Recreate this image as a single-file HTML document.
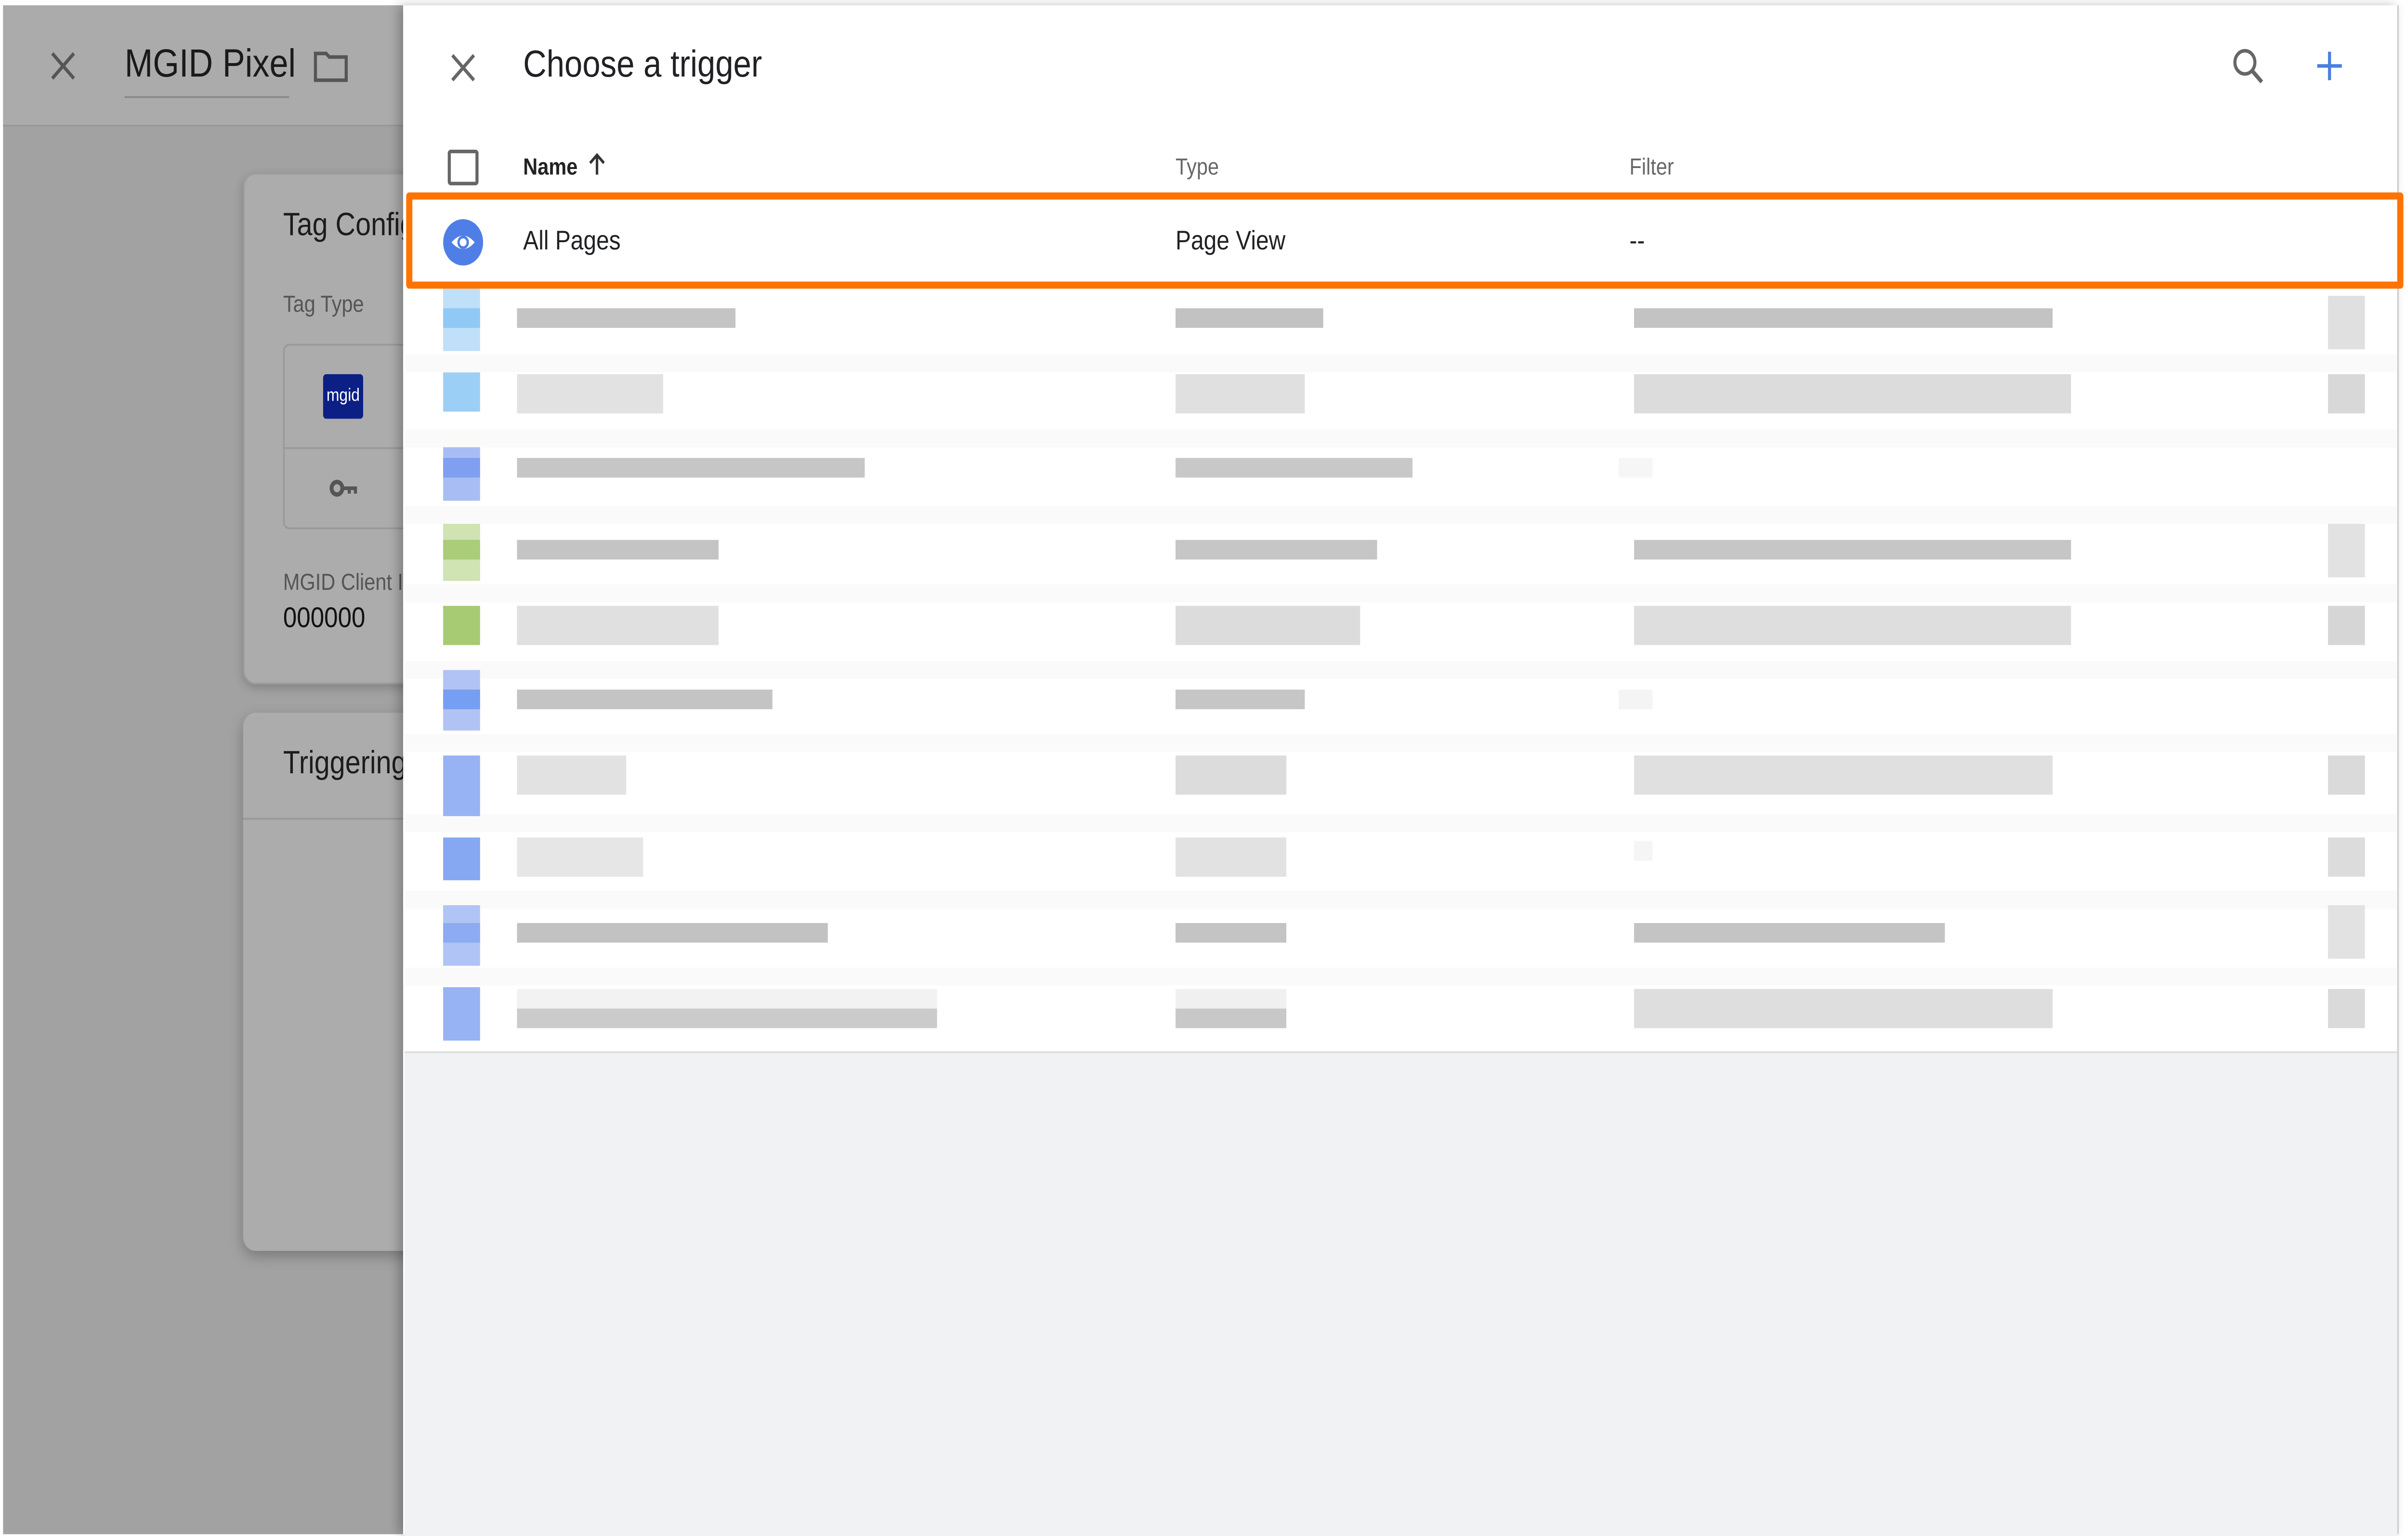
<!DOCTYPE html>
<html><head><meta charset="utf-8"><style>
html,body{margin:0;padding:0;width:100%;height:100%;overflow:hidden;background:#fff}
#root{position:fixed;left:0;top:0;width:100vw;height:100vh}
#s{position:relative;width:1565px;height:862px;overflow:hidden;font-family:"Liberation Sans",Arial,sans-serif}
.a{position:absolute}
.bar{position:absolute;height:11px}
</style></head><body>
<svg id="root" viewBox="0 0 1565 862" preserveAspectRatio="none" xmlns="http://www.w3.org/2000/svg"><foreignObject x="0" y="0" width="1565" height="862"><div xmlns="http://www.w3.org/1999/xhtml" id="s">
<div class="a" style="left:0;top:0;width:1565px;height:862px;background:#fff"></div>
<div class="a" style="left:2px;top:3px;width:262px;height:858px;background:#a1a2a1"></div>
<div class="a" style="left:2px;top:3px;width:262px;height:67px;background:#ababab;border-bottom:1px solid #999"></div>
<svg class="a" style="left:31px;top:27px" width="20" height="20" viewBox="0 0 20 20"><path d="M3 3L17 17M17 3L3 17" stroke="#555" stroke-width="2"/></svg>
<div class="a" style="left:81px;top:23px;font-size:22px;color:#1a1a1a">MGID Pixel</div>
<div class="a" style="left:81px;top:54px;width:107px;height:1px;background:#888"></div>
<svg class="a" style="left:203px;top:27px" width="24" height="20" viewBox="0 0 24 20"><path d="M2 3h7l2 2h11v13H2z" fill="none" stroke="#555" stroke-width="2"/></svg>
<div class="a" style="left:158px;top:97px;width:120px;height:285px;background:#acacac;border-radius:8px;border:1px solid #9d9d9d;box-shadow:0 2px 6px rgba(0,0,0,.2)"></div>
<div class="a" style="left:184px;top:116px;font-size:18px;color:#1c1c1c">Tag Config</div>
<div class="a" style="left:184px;top:163px;font-size:13px;color:#555">Tag Type</div>
<div class="a" style="left:184px;top:193px;width:90px;height:102px;border:1px solid #999;border-radius:4px"></div>
<div class="a" style="left:184px;top:251px;width:90px;height:1px;background:#999"></div>
<div class="a" style="left:210px;top:210px;width:26px;height:25px;background:#0b1f85;border-radius:2px;color:#fff;font-size:10px;line-height:25px;text-align:center">mgid</div>
<svg class="a" style="left:214px;top:268px" width="20" height="12" viewBox="0 0 20 12"><circle cx="5" cy="6" r="3.5" fill="none" stroke="#555" stroke-width="2.5"/><path d="M8 5h10v4h-2V7h-2v2h-2V7H8z" fill="#555"/></svg>
<div class="a" style="left:184px;top:319px;font-size:13px;color:#555">MGID Client I</div>
<div class="a" style="left:184px;top:339px;font-size:16px;color:#111">000000</div>
<div class="a" style="left:158px;top:400px;width:120px;height:302px;background:#acacac;border-radius:8px;box-shadow:0 3px 8px rgba(0,0,0,.25)"></div>
<div class="a" style="left:158px;top:459px;width:120px;height:1px;background:#999"></div>
<div class="a" style="left:184px;top:418px;font-size:18px;color:#1c1c1c">Triggering</div>
<div class="a" style="left:262px;top:3px;width:1296px;height:858px;background:#fff;box-shadow:-3px 0 6px rgba(0,0,0,.25);border-right:1px solid #ccc"></div>
<div class="a" style="left:263px;top:590px;width:1295px;height:271px;background:#f1f2f4;border-top:1px solid #dadce0"></div>
<svg class="a" style="left:291px;top:28px" width="20" height="20" viewBox="0 0 20 20"><path d="M3 3L17 17M17 3L3 17" stroke="#666" stroke-width="2"/></svg>
<div class="a" style="left:340px;top:25px;font-size:21px;color:#202124">Choose a trigger</div>
<svg class="a" style="left:1450px;top:26px" width="22" height="22" viewBox="0 0 22 22"><circle cx="9" cy="9" r="6.5" fill="none" stroke="#666" stroke-width="2"/><path d="M14 14l6 6" stroke="#666" stroke-width="2.4"/></svg>
<svg class="a" style="left:1504px;top:27px" width="20" height="20" viewBox="0 0 20 20"><path d="M10 2v16M2 10h16" stroke="#4a7fe0" stroke-width="2"/></svg>
<div class="a" style="left:291px;top:84px;width:16px;height:16px;border:2px solid #666;border-radius:2px"></div>
<div class="a" style="left:340px;top:86px;font-size:13px;font-weight:bold;color:#222">Name</div>
<svg class="a" style="left:381px;top:85px" width="14" height="14" viewBox="0 0 14 14"><path d="M7 13V2M2.5 6.5L7 2l4.5 4.5" fill="none" stroke="#333" stroke-width="1.6"/></svg>
<div class="a" style="left:764px;top:86px;font-size:13px;color:#666">Type</div>
<div class="a" style="left:1059px;top:86px;font-size:13px;color:#666">Filter</div>
<div class="a" style="left:264px;top:108px;width:1290px;height:46px;border:4px solid #ff7300;border-radius:2px"></div>
<svg class="a" style="left:288px;top:123px" width="26" height="26" viewBox="0 0 26 26"><circle cx="13" cy="13" r="13" fill="#4f7fe6"/><path d="M5.5 13Q13 5.5 20.5 13Q13 20.5 5.5 13z" fill="#fff"/><circle cx="13" cy="13" r="3" fill="none" stroke="#4f7fe6" stroke-width="1.5"/></svg>
<div class="a" style="left:340px;top:127px;font-size:15px;color:#202124">All Pages</div>
<div class="a" style="left:764px;top:127px;font-size:15px;color:#202124">Page View</div>
<div class="a" style="left:1059px;top:127px;font-size:15px;color:#202124">--</div>
<div class="a" style="left:263px;top:199px;width:1295px;height:10px;background:#fafafa"></div>
<div class="a" style="left:263px;top:241px;width:1295px;height:10px;background:#fafafa"></div>
<div class="a" style="left:263px;top:284px;width:1295px;height:10px;background:#fafafa"></div>
<div class="a" style="left:263px;top:328px;width:1295px;height:10px;background:#fafafa"></div>
<div class="a" style="left:263px;top:371px;width:1295px;height:10px;background:#fafafa"></div>
<div class="a" style="left:263px;top:412px;width:1295px;height:10px;background:#fafafa"></div>
<div class="a" style="left:263px;top:457px;width:1295px;height:10px;background:#fafafa"></div>
<div class="a" style="left:263px;top:500px;width:1295px;height:10px;background:#fafafa"></div>
<div class="a" style="left:263px;top:543px;width:1295px;height:10px;background:#fafafa"></div>
<div class="bar" style="left:288px;top:162px;width:24px;height:35px;background:#bfe0f8"></div><div class="bar" style="left:288px;top:173px;width:24px;background:#90c9f5"></div>
<div class="bar" style="left:336px;top:173px;width:142px;background:#c4c4c4"></div><div class="bar" style="left:764px;top:173px;width:96px;background:#c2c2c2"></div>
<div class="bar" style="left:1062px;top:173px;width:272px;background:#c3c3c3"></div><div class="bar" style="left:1513px;top:166px;width:24px;height:30px;background:#e0e0e0"></div>
<div class="bar" style="left:288px;top:209px;width:24px;height:22px;background:#9ccff5"></div>
<div class="bar" style="left:336px;top:210px;width:95px;height:22px;background:#e2e2e2"></div><div class="bar" style="left:764px;top:210px;width:84px;height:22px;background:#e0e0e0"></div>
<div class="bar" style="left:1062px;top:210px;width:284px;height:22px;background:#dcdcdc"></div><div class="bar" style="left:1513px;top:210px;width:24px;height:22px;background:#d8d8d8"></div>
<div class="bar" style="left:288px;top:251px;width:24px;height:30px;background:#a9bdf5"></div><div class="bar" style="left:288px;top:257px;width:24px;background:#7fa0f0"></div>
<div class="bar" style="left:336px;top:257px;width:226px;background:#c6c6c6"></div><div class="bar" style="left:764px;top:257px;width:154px;background:#c8c8c8"></div>
<div class="bar" style="left:1052px;top:257px;width:22px;background:#f6f6f6"></div>
<div class="bar" style="left:288px;top:294px;width:24px;height:32px;background:#cfe3b3"></div><div class="bar" style="left:288px;top:303px;width:24px;background:#a9cd78"></div>
<div class="bar" style="left:336px;top:303px;width:131px;background:#c4c4c4"></div><div class="bar" style="left:764px;top:303px;width:131px;background:#c6c6c6"></div>
<div class="bar" style="left:1062px;top:303px;width:284px;background:#c6c6c6"></div><div class="bar" style="left:1513px;top:294px;width:24px;height:30px;background:#e2e2e2"></div>
<div class="bar" style="left:288px;top:340px;width:24px;height:22px;background:#a6cb73"></div>
<div class="bar" style="left:336px;top:340px;width:131px;height:22px;background:#e0e0e0"></div><div class="bar" style="left:764px;top:340px;width:120px;height:22px;background:#dcdcdc"></div>
<div class="bar" style="left:1062px;top:340px;width:284px;height:22px;background:#dedede"></div><div class="bar" style="left:1513px;top:340px;width:24px;height:22px;background:#d6d6d6"></div>
<div class="bar" style="left:288px;top:376px;width:24px;height:34px;background:#b0c3f4"></div><div class="bar" style="left:288px;top:387px;width:24px;background:#769ef2"></div>
<div class="bar" style="left:336px;top:387px;width:166px;background:#c4c4c4"></div><div class="bar" style="left:764px;top:387px;width:84px;background:#c6c6c6"></div>
<div class="bar" style="left:1052px;top:387px;width:22px;background:#f4f4f4"></div>
<div class="bar" style="left:288px;top:424px;width:24px;height:34px;background:#98b3f3"></div>
<div class="bar" style="left:336px;top:424px;width:71px;height:22px;background:#e2e2e2"></div><div class="bar" style="left:764px;top:424px;width:72px;height:22px;background:#dcdcdc"></div>
<div class="bar" style="left:1062px;top:424px;width:272px;height:22px;background:#e0e0e0"></div><div class="bar" style="left:1513px;top:424px;width:24px;height:22px;background:#dadada"></div>
<div class="bar" style="left:288px;top:470px;width:24px;height:24px;background:#86a7f1"></div>
<div class="bar" style="left:336px;top:470px;width:82px;height:22px;background:#e6e6e6"></div><div class="bar" style="left:764px;top:470px;width:72px;height:22px;background:#e2e2e2"></div>
<div class="bar" style="left:1062px;top:472px;width:12px;background:#f5f5f5"></div><div class="bar" style="left:1513px;top:470px;width:24px;height:22px;background:#dcdcdc"></div>
<div class="bar" style="left:288px;top:508px;width:24px;height:34px;background:#b0c4f5"></div><div class="bar" style="left:288px;top:518px;width:24px;background:#8cabf2"></div>
<div class="bar" style="left:336px;top:518px;width:202px;background:#c2c2c2"></div><div class="bar" style="left:764px;top:518px;width:72px;background:#c4c4c4"></div>
<div class="bar" style="left:1062px;top:518px;width:202px;background:#c4c4c4"></div><div class="bar" style="left:1513px;top:508px;width:24px;height:30px;background:#e2e2e2"></div>
<div class="bar" style="left:288px;top:554px;width:24px;height:30px;background:#98b3f3"></div>
<div class="bar" style="left:336px;top:555px;width:273px;height:11px;background:#f2f2f2"></div><div class="bar" style="left:336px;top:566px;width:273px;background:#cbcbcb"></div>
<div class="bar" style="left:764px;top:555px;width:72px;height:11px;background:#f0f0f0"></div><div class="bar" style="left:764px;top:566px;width:72px;background:#c8c8c8"></div>
<div class="bar" style="left:1062px;top:555px;width:272px;height:22px;background:#dedede"></div><div class="bar" style="left:1513px;top:555px;width:24px;height:22px;background:#dadada"></div>
</div></foreignObject></svg>
</body></html>
